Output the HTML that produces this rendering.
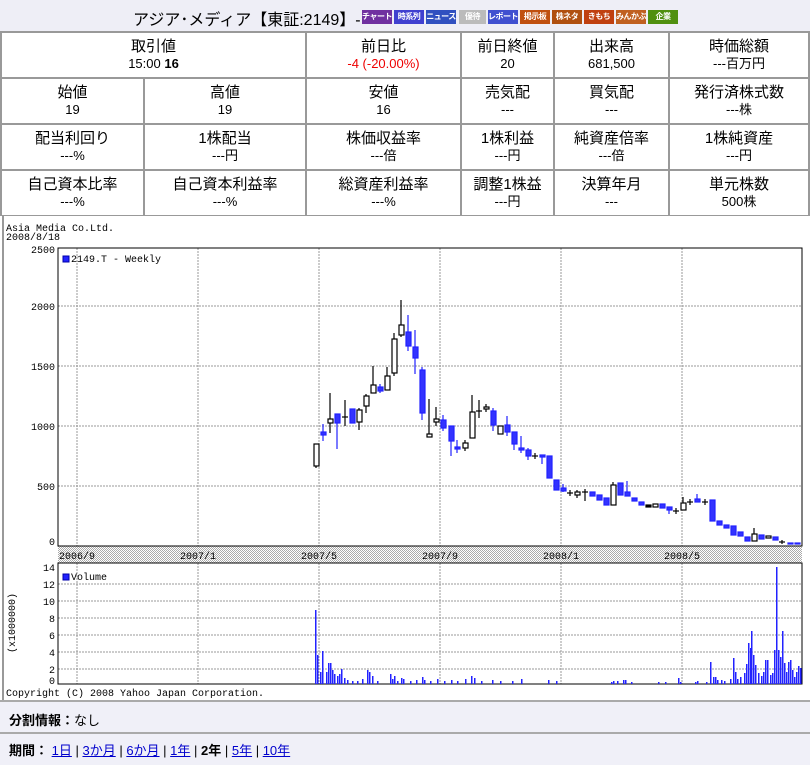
<!DOCTYPE html>
<html><head><meta charset="utf-8"><style>
body{margin:0;width:810px;height:763px;background:#fff;font-family:"Liberation Sans","Noto Sans CJK JP",sans-serif;position:relative;overflow:hidden}
.hd{position:absolute;left:0;top:0;width:810px;height:32px;background:#eeeef6;}
.t{position:absolute;font-size:16px;color:#000;white-space:nowrap}
.btn{position:absolute;top:10px;height:14px;font-size:8px;color:#fff;font-weight:bold;line-height:14px;text-align:center;overflow:hidden;white-space:nowrap;letter-spacing:-0.5px}
table{position:absolute;border-collapse:collapse;left:0;width:810px;table-layout:fixed}
td{border:2px solid #999;text-align:center;font-size:15px;line-height:17px;padding:0;height:44px;vertical-align:middle}
td span{font-size:13px;display:block}
.ft{position:absolute;left:0;width:810px;background:#f0f0f8;border-top:2px solid #aaa;font-size:13px}
a{color:#00c;text-decoration:underline}
</style></head><body>
<div class="hd"></div>
<div class="t" style="left:133px;top:6px">アジア･メディア【東証:2149】-</div>
<div class="btn" style="left:362px;width:30px;background:#7030a0">チャート</div>
<div class="btn" style="left:394px;width:30px;background:#4040d0">時系列</div>
<div class="btn" style="left:426px;width:30px;background:#3050c0">ニュース</div>
<div class="btn" style="left:459px;width:27px;background:#bbb">優待</div>
<div class="btn" style="left:488px;width:30px;background:#4050d0">レポート</div>
<div class="btn" style="left:520px;width:30px;background:#c05010">掲示板</div>
<div class="btn" style="left:552px;width:30px;background:#b05010">株ネタ</div>
<div class="btn" style="left:584px;width:30px;background:#c04010">きもち</div>
<div class="btn" style="left:616px;width:30px;background:#c06020">みんかぶ</div>
<div class="btn" style="left:648px;width:30px;background:#509010">企業</div>
<table style="top:31px">
<colgroup><col style="width:143px"><col style="width:162px"><col style="width:155px"><col style="width:93px"><col style="width:115px"><col></colgroup>
<tr><td colspan="2">取引値<span>15:00 <b>16</b></span></td><td>前日比<span style="color:#e00">-4 (-20.00%)</span></td><td>前日終値<span>20</span></td><td>出来高<span>681,500</span></td><td>時価総額<span>---百万円</span></td></tr>
<tr><td>始値<span>19</span></td><td>高値<span>19</span></td><td>安値<span>16</span></td><td>売気配<span>---</span></td><td>買気配<span>---</span></td><td>発行済株式数<span>---株</span></td></tr>
<tr><td>配当利回り<span>---%</span></td><td>1株配当<span>---円</span></td><td>株価収益率<span>---倍</span></td><td>1株利益<span>---円</span></td><td>純資産倍率<span>---倍</span></td><td>1株純資産<span>---円</span></td></tr>
<tr><td>自己資本比率<span>---%</span></td><td>自己資本利益率<span>---%</span></td><td>総資産利益率<span>---%</span></td><td>調整1株益<span>---円</span></td><td>決算年月<span>---</span></td><td>単元株数<span>500株</span></td></tr>
</table>
<svg style="position:absolute;left:0;top:216px" width="810" height="485" viewBox="0 216 810 485" font-family="Liberation Mono,monospace" font-size="10">
<defs><pattern id="dp" width="2" height="2" patternUnits="userSpaceOnUse"><rect width="2" height="2" fill="#fff"/><rect width="1" height="1" fill="#aaa"/><rect x="1" y="1" width="1" height="1" fill="#aaa"/></pattern></defs>
<rect x="0" y="216" width="810" height="485" fill="#fff"/>
<line x1="3" y1="216" x2="3" y2="700" stroke="#999" stroke-width="2"/>
<text x="6" y="231">Asia  Media  Co.Ltd.</text>
<text x="6" y="240">2008/8/18</text>
<rect x="58" y="546" width="744" height="17" fill="url(#dp)"/>
<g stroke="#999" stroke-dasharray="2,1">
<line x1="58" y1="306" x2="802" y2="306"/><line x1="58" y1="366" x2="802" y2="366"/><line x1="58" y1="426" x2="802" y2="426"/><line x1="58" y1="486" x2="802" y2="486"/>
<line x1="77" y1="248" x2="77" y2="546"/><line x1="198" y1="248" x2="198" y2="546"/><line x1="319" y1="248" x2="319" y2="546"/><line x1="440" y1="248" x2="440" y2="546"/><line x1="561" y1="248" x2="561" y2="546"/><line x1="682" y1="248" x2="682" y2="546"/>
<line x1="58" y1="584" x2="802" y2="584"/><line x1="58" y1="601" x2="802" y2="601"/><line x1="58" y1="618" x2="802" y2="618"/><line x1="58" y1="635" x2="802" y2="635"/><line x1="58" y1="652" x2="802" y2="652"/><line x1="58" y1="669" x2="802" y2="669"/>
<line x1="77" y1="563" x2="77" y2="684"/><line x1="198" y1="563" x2="198" y2="684"/><line x1="319" y1="563" x2="319" y2="684"/><line x1="440" y1="563" x2="440" y2="684"/><line x1="561" y1="563" x2="561" y2="684"/><line x1="682" y1="563" x2="682" y2="684"/>
</g>
<rect x="58" y="248" width="744" height="298" fill="none" stroke="#000"/>
<rect x="58" y="563" width="744" height="121" fill="none" stroke="#000"/>
<g text-anchor="end"><text x="55" y="253">2500</text><text x="55" y="310">2000</text><text x="55" y="370">1500</text><text x="55" y="430">1000</text><text x="55" y="490">500</text><text x="55" y="545">0</text>
<text x="55" y="571">14</text><text x="55" y="588">12</text><text x="55" y="605">10</text><text x="55" y="622">8</text><text x="55" y="639">6</text><text x="55" y="656">4</text><text x="55" y="673">2</text><text x="55" y="684">0</text></g>
<text transform="translate(15,623) rotate(-90)" text-anchor="middle">(x1000000)</text>
<text x="59" y="559">2006/9</text><text x="180" y="559">2007/1</text><text x="301" y="559">2007/5</text><text x="422" y="559">2007/9</text><text x="543" y="559">2008/1</text><text x="664" y="559">2008/5</text>
<rect x="63" y="256" width="6" height="6" fill="#22f" stroke="#00a"/><text x="71" y="262">2149.T - Weekly</text>
<rect x="63" y="574" width="6" height="6" fill="#22f" stroke="#00a"/><text x="71" y="580">Volume</text>
<text x="6" y="696">Copyright (C) 2008 Yahoo Japan Corporation.</text>
<g stroke="#000" stroke-width="1.2" fill="#fff">
<line x1="316" y1="444" x2="316" y2="468"/><rect x="314" y="444" width="5" height="22"/>
<line x1="330" y1="393" x2="330" y2="433"/><rect x="328" y="419" width="5" height="4"/>
<line x1="345" y1="400" x2="345" y2="426"/><line x1="342" y1="417" x2="348" y2="417"/>
<line x1="359" y1="408" x2="359" y2="430"/><rect x="357" y="410" width="5" height="12"/>
<line x1="366" y1="394" x2="366" y2="413"/><rect x="364" y="396" width="5" height="10"/>
<line x1="373" y1="366" x2="373" y2="393"/><rect x="371" y="385" width="5" height="8"/>
<line x1="387" y1="367" x2="387" y2="390"/><rect x="385" y="376" width="5" height="14"/>
<line x1="394" y1="333" x2="394" y2="376"/><rect x="392" y="339" width="5" height="34"/>
<line x1="401" y1="300" x2="401" y2="337"/><rect x="399" y="325" width="5" height="10"/>
<line x1="429" y1="399" x2="429" y2="437"/><rect x="427" y="434" width="5" height="3"/>
<line x1="436" y1="407" x2="436" y2="426"/><rect x="434" y="419" width="5" height="3"/>
<line x1="465" y1="440" x2="465" y2="451"/><rect x="463" y="443" width="5" height="5"/>
<line x1="472" y1="395" x2="472" y2="438"/><rect x="470" y="412" width="5" height="26"/>
<line x1="479" y1="400" x2="479" y2="418"/><line x1="476" y1="411" x2="482" y2="411"/>
<line x1="486" y1="404" x2="486" y2="412"/><rect x="484" y="407" width="5" height="2"/>
<rect x="498" y="426" width="5" height="8"/>
<line x1="535" y1="453" x2="535" y2="459"/><line x1="532" y1="456" x2="538" y2="456"/>
<line x1="570" y1="490" x2="570" y2="496"/><line x1="567" y1="493" x2="573" y2="493"/>
<line x1="577" y1="490" x2="577" y2="498"/><rect x="575" y="492" width="5" height="3"/>
<line x1="585" y1="489" x2="585" y2="501"/><line x1="582" y1="492" x2="588" y2="492"/>
<line x1="613" y1="482" x2="613" y2="505"/><rect x="611" y="485" width="5" height="20"/>
<rect x="646" y="505" width="5" height="2" fill="#000"/>
<rect x="653" y="504" width="5" height="3"/>
<line x1="676" y1="508" x2="676" y2="514"/><line x1="673" y1="511" x2="679" y2="511"/>
<line x1="683" y1="497" x2="683" y2="510"/><rect x="681" y="503" width="5" height="7"/>
<line x1="690" y1="499" x2="690" y2="505"/><line x1="687" y1="502" x2="693" y2="502"/>
<line x1="705" y1="499" x2="705" y2="505"/><line x1="702" y1="502" x2="708" y2="502"/>
<line x1="754" y1="528" x2="754" y2="541"/><rect x="752" y="534" width="5" height="7"/>
<rect x="766" y="536" width="5" height="2"/>
<line x1="782" y1="540" x2="782" y2="544"/><line x1="779" y1="542" x2="785" y2="542"/>
</g>
<g stroke="#22f" stroke-width="1.2" fill="#33f">
<line x1="323" y1="424" x2="323" y2="441"/><rect x="321" y="432" width="5" height="3"/>
<line x1="337" y1="414" x2="337" y2="449"/><rect x="335" y="414" width="5" height="9"/>
<rect x="350" y="409" width="5" height="14"/>
<line x1="380" y1="384" x2="380" y2="393"/><rect x="378" y="387" width="5" height="4"/>
<line x1="408" y1="315" x2="408" y2="351"/><rect x="406" y="332" width="5" height="14"/>
<line x1="415" y1="330" x2="415" y2="374"/><rect x="413" y="347" width="5" height="11"/>
<line x1="422" y1="367" x2="422" y2="420"/><rect x="420" y="370" width="5" height="43"/>
<line x1="443" y1="415" x2="443" y2="431"/><rect x="441" y="420" width="5" height="8"/>
<line x1="451" y1="426" x2="451" y2="456"/><rect x="449" y="426" width="5" height="15"/>
<line x1="457" y1="440" x2="457" y2="453"/><rect x="455" y="447" width="5" height="2"/>
<line x1="493" y1="408" x2="493" y2="431"/><rect x="491" y="411" width="5" height="14"/>
<line x1="507" y1="416" x2="507" y2="436"/><rect x="505" y="425" width="5" height="7"/>
<line x1="514" y1="432" x2="514" y2="450"/><rect x="512" y="432" width="5" height="12"/>
<line x1="521" y1="436" x2="521" y2="453"/><rect x="519" y="448" width="5" height="2"/>
<line x1="528" y1="448" x2="528" y2="460"/><rect x="526" y="450" width="5" height="6"/>
<line x1="542" y1="455" x2="542" y2="464"/><rect x="540" y="455" width="5" height="2"/>
<rect x="547" y="456" width="5" height="22"/>
<rect x="554" y="480" width="5" height="10"/>
<line x1="563" y1="484" x2="563" y2="492"/><rect x="561" y="488" width="5" height="3"/>
<rect x="590" y="492" width="5" height="4"/>
<rect x="597" y="495" width="5" height="5"/>
<rect x="604" y="498" width="5" height="7"/>
<rect x="618" y="483" width="5" height="12"/>
<line x1="627" y1="481" x2="627" y2="496"/><rect x="625" y="492" width="5" height="4"/>
<rect x="632" y="498" width="5" height="3"/>
<rect x="639" y="502" width="5" height="3"/>
<rect x="660" y="504" width="5" height="4"/>
<line x1="669" y1="507" x2="669" y2="514"/><rect x="667" y="507" width="5" height="3"/>
<line x1="697" y1="494" x2="697" y2="502"/><rect x="695" y="499" width="5" height="3"/>
<rect x="710" y="500" width="5" height="21"/>
<rect x="717" y="521" width="5" height="4"/>
<rect x="724" y="525" width="5" height="3"/>
<rect x="731" y="526" width="5" height="9"/>
<rect x="738" y="532" width="5" height="4"/>
<rect x="745" y="537" width="5" height="4"/>
<rect x="759" y="535" width="5" height="4"/>
<rect x="773" y="537" width="5" height="3"/>
<rect x="788" y="543" width="5" height="1"/>
<rect x="795" y="543" width="5" height="1"/>
</g>
<g fill="#22f">
<rect x="315" y="610" width="1.5" height="74"/><rect x="317" y="655" width="1.5" height="29"/><rect x="320" y="672" width="1.5" height="12"/><rect x="322" y="651" width="1.5" height="33"/>
<rect x="326" y="672" width="1.5" height="12"/><rect x="328" y="663" width="1.5" height="21"/><rect x="330" y="663" width="1.5" height="21"/><rect x="332" y="670" width="1.5" height="14"/><rect x="334" y="674" width="1.5" height="10"/><rect x="337" y="676" width="1.5" height="8"/><rect x="339" y="674" width="1.5" height="10"/><rect x="341" y="669" width="1.5" height="15"/><rect x="344" y="678" width="1.5" height="6"/><rect x="347" y="680" width="1.5" height="4"/>
<rect x="352" y="681" width="1.5" height="3"/><rect x="357" y="681" width="1.5" height="3"/><rect x="362" y="679" width="1.5" height="5"/><rect x="367" y="670" width="1.5" height="14"/><rect x="369" y="672" width="1.5" height="12"/><rect x="372" y="676" width="1.5" height="8"/><rect x="377" y="681" width="1.5" height="3"/>
<rect x="390" y="674" width="1.5" height="10"/><rect x="392" y="679" width="1.5" height="5"/><rect x="394" y="676" width="1.5" height="8"/><rect x="397" y="681" width="1.5" height="3"/><rect x="401" y="678" width="1.5" height="6"/><rect x="403" y="679" width="1.5" height="5"/><rect x="410" y="681" width="1.5" height="3"/><rect x="416" y="680" width="1.5" height="4"/><rect x="422" y="677" width="1.5" height="7"/><rect x="424" y="680" width="1.5" height="4"/><rect x="430" y="681" width="1.5" height="3"/><rect x="437" y="679" width="1.5" height="5"/><rect x="444" y="681" width="1.5" height="3"/><rect x="451" y="680" width="1.5" height="4"/><rect x="457" y="681" width="1.5" height="3"/><rect x="465" y="679" width="1.5" height="5"/><rect x="471" y="676" width="1.5" height="8"/><rect x="474" y="678" width="1.5" height="6"/><rect x="481" y="681" width="1.5" height="3"/><rect x="492" y="680" width="1.5" height="4"/><rect x="500" y="681" width="1.5" height="3"/><rect x="512" y="681" width="1.5" height="3"/><rect x="521" y="679" width="1.5" height="5"/><rect x="548" y="680" width="1.5" height="4"/><rect x="556" y="681" width="1.5" height="3"/>
<rect x="611" y="682" width="1.5" height="2"/><rect x="613" y="681" width="1.5" height="3"/><rect x="617" y="681" width="1.5" height="3"/><rect x="623" y="680" width="1.5" height="4"/><rect x="625" y="680" width="1.5" height="4"/><rect x="631" y="682" width="1.5" height="2"/><rect x="658" y="682" width="1.5" height="2"/><rect x="665" y="682" width="1.5" height="2"/><rect x="678" y="678" width="1.5" height="6"/><rect x="680" y="682" width="1.5" height="2"/>
<rect x="695" y="682" width="1.5" height="2"/><rect x="697" y="681" width="1.5" height="3"/><rect x="706" y="682" width="1.5" height="2"/><rect x="710" y="662" width="1.5" height="22"/><rect x="713" y="677" width="1.5" height="7"/><rect x="715" y="677" width="1.5" height="7"/><rect x="717" y="680" width="1.5" height="4"/><rect x="721" y="680" width="1.5" height="4"/><rect x="724" y="681" width="1.5" height="3"/><rect x="730" y="679" width="1.5" height="5"/><rect x="733" y="658" width="1.5" height="26"/><rect x="735" y="672" width="1.5" height="12"/><rect x="737" y="679" width="1.5" height="5"/><rect x="740" y="677" width="1.5" height="7"/><rect x="744" y="673" width="1.5" height="11"/><rect x="746" y="664" width="1.5" height="20"/><rect x="748" y="643" width="1.5" height="41"/><rect x="750" y="648" width="1.5" height="36"/><rect x="751" y="631" width="1.5" height="53"/><rect x="753" y="655" width="1.5" height="29"/><rect x="755" y="665" width="1.5" height="19"/><rect x="758" y="673" width="1.5" height="11"/><rect x="761" y="676" width="1.5" height="8"/><rect x="763" y="672" width="1.5" height="12"/><rect x="765" y="660" width="1.5" height="24"/><rect x="767" y="660" width="1.5" height="24"/><rect x="770" y="675" width="1.5" height="9"/><rect x="772" y="673" width="1.5" height="11"/><rect x="774" y="650" width="1.5" height="34"/><rect x="776" y="567" width="1.5" height="117"/><rect x="778" y="650" width="1.5" height="34"/><rect x="780" y="657" width="1.5" height="27"/><rect x="782" y="631" width="1.5" height="53"/><rect x="784" y="663" width="1.5" height="21"/><rect x="786" y="672" width="1.5" height="12"/><rect x="788" y="662" width="1.5" height="22"/><rect x="790" y="660" width="1.5" height="24"/><rect x="792" y="670" width="1.5" height="14"/><rect x="794" y="677" width="1.5" height="7"/><rect x="796" y="672" width="1.5" height="12"/><rect x="798" y="666" width="1.5" height="18"/><rect x="800" y="668" width="1.5" height="16"/>
</g>
</svg>
<div class="ft" style="top:700px;height:30px"><div style="position:absolute;left:9px;top:8px"><b>分割情報：</b>なし</div></div>
<div class="ft" style="top:732px;height:31px"><div style="position:absolute;left:9px;top:6px"><b>期間：</b> <a>1日</a> | <a>3か月</a> | <a>6か月</a> | <a>1年</a> | <b>2年</b> | <a>5年</a> | <a>10年</a></div></div>
</body></html>
